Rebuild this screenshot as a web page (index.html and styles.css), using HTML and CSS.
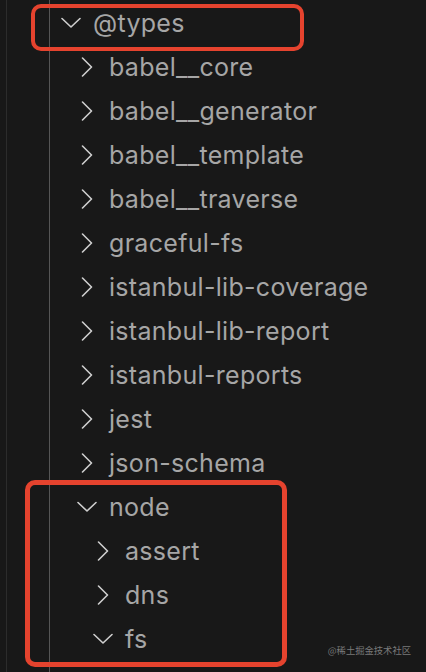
FILE: index.html
```html
<!DOCTYPE html>
<html>
<head>
<meta charset="utf-8">
<link rel="stylesheet" href="styles.css">
</head>
<body>
<div class="explorer">
  <div class="guide guide-outer"></div>
  <div class="guide guide-inner"></div>
  <ul class="tree">
    <li class="row l0"><span class="tw"><svg width="20" height="12" viewBox="0 0 20 12"><polyline points="1,1.5 10,10 19,1.5"/></svg></span><span class="name">@types</span></li>
    <li class="row l1"><span class="tw"><svg width="12" height="20" viewBox="0 0 12 20"><polyline points="1.5,1 10.5,10 1.5,19"/></svg></span><span class="name">babel__core</span></li>
    <li class="row l1"><span class="tw"><svg width="12" height="20" viewBox="0 0 12 20"><polyline points="1.5,1 10.5,10 1.5,19"/></svg></span><span class="name">babel__generator</span></li>
    <li class="row l1"><span class="tw"><svg width="12" height="20" viewBox="0 0 12 20"><polyline points="1.5,1 10.5,10 1.5,19"/></svg></span><span class="name">babel__template</span></li>
    <li class="row l1"><span class="tw"><svg width="12" height="20" viewBox="0 0 12 20"><polyline points="1.5,1 10.5,10 1.5,19"/></svg></span><span class="name">babel__traverse</span></li>
    <li class="row l1"><span class="tw"><svg width="12" height="20" viewBox="0 0 12 20"><polyline points="1.5,1 10.5,10 1.5,19"/></svg></span><span class="name">graceful-fs</span></li>
    <li class="row l1"><span class="tw"><svg width="12" height="20" viewBox="0 0 12 20"><polyline points="1.5,1 10.5,10 1.5,19"/></svg></span><span class="name">istanbul-lib-coverage</span></li>
    <li class="row l1"><span class="tw"><svg width="12" height="20" viewBox="0 0 12 20"><polyline points="1.5,1 10.5,10 1.5,19"/></svg></span><span class="name">istanbul-lib-report</span></li>
    <li class="row l1"><span class="tw"><svg width="12" height="20" viewBox="0 0 12 20"><polyline points="1.5,1 10.5,10 1.5,19"/></svg></span><span class="name">istanbul-reports</span></li>
    <li class="row l1"><span class="tw"><svg width="12" height="20" viewBox="0 0 12 20"><polyline points="1.5,1 10.5,10 1.5,19"/></svg></span><span class="name">jest</span></li>
    <li class="row l1"><span class="tw"><svg width="12" height="20" viewBox="0 0 12 20"><polyline points="1.5,1 10.5,10 1.5,19"/></svg></span><span class="name">json-schema</span></li>
    <li class="row l1"><span class="tw"><svg width="20" height="12" viewBox="0 0 20 12"><polyline points="1,1.5 10,10 19,1.5"/></svg></span><span class="name">node</span></li>
    <li class="row l2"><span class="tw"><svg width="12" height="20" viewBox="0 0 12 20"><polyline points="1.5,1 10.5,10 1.5,19"/></svg></span><span class="name">assert</span></li>
    <li class="row l2"><span class="tw"><svg width="12" height="20" viewBox="0 0 12 20"><polyline points="1.5,1 10.5,10 1.5,19"/></svg></span><span class="name">dns</span></li>
    <li class="row l2"><span class="tw"><svg width="20" height="12" viewBox="0 0 20 12"><polyline points="1,1.5 10,10 19,1.5"/></svg></span><span class="name">fs</span></li>
  </ul>
  <div class="mark mark-top"></div>
  <div class="mark mark-bottom"></div>
  <div class="watermark">@稀土掘金技术社区</div>
</div>
</body>
</html>
```

FILE: styles.css
```css
html, body {
  margin: 0;
  padding: 0;
  background: #181818;
}
.explorer {
  position: relative;
  width: 426px;
  height: 672px;
  overflow: hidden;
  background: #181818;
  font-family: Inter, "Noto Sans", sans-serif;
}
.guide {
  position: absolute;
  top: 0;
  bottom: 0;
  width: 1px;
}
.guide-outer {
  left: 6px;
  background: #2c2c2c;
}
.guide-inner {
  left: 49px;
  background: #555555;
}
.tree {
  list-style: none;
  margin: 0;
  padding: 1px 0 0 0;
}
.row {
  height: 44px;
  display: flex;
  align-items: center;
  color: #a6a6a6;
  font-size: 25px;
  letter-spacing: 0.3px;
  white-space: nowrap;
}
.l0 { padding-left: 60px; }
.l1 { padding-left: 76px; }
.l2 { padding-left: 92px; }
.tw {
  width: 22px;
  height: 22px;
  margin-right: 11px;
  display: flex;
  align-items: center;
  justify-content: center;
  flex: none;
}
.tw svg {
  display: block;
  fill: none;
  stroke: #cfcfcf;
  stroke-width: 1.6;
  stroke-linecap: round;
  stroke-linejoin: round;
}
.name {
  line-height: 44px;
}
.mark {
  position: absolute;
  border: 4px solid #e5432e;
  border-radius: 10px;
  box-sizing: border-box;
}
.mark-top {
  left: 31px;
  top: 4px;
  width: 273px;
  height: 47px;
}
.mark-bottom {
  left: 25px;
  top: 480px;
  width: 262px;
  height: 187px;
  border-width: 5px;
}
.watermark {
  position: absolute;
  right: 15px;
  bottom: 15px;
  font-family: "Noto Sans CJK SC", sans-serif;
  font-size: 9.3px;
  color: #7a7a7a;
}
```
